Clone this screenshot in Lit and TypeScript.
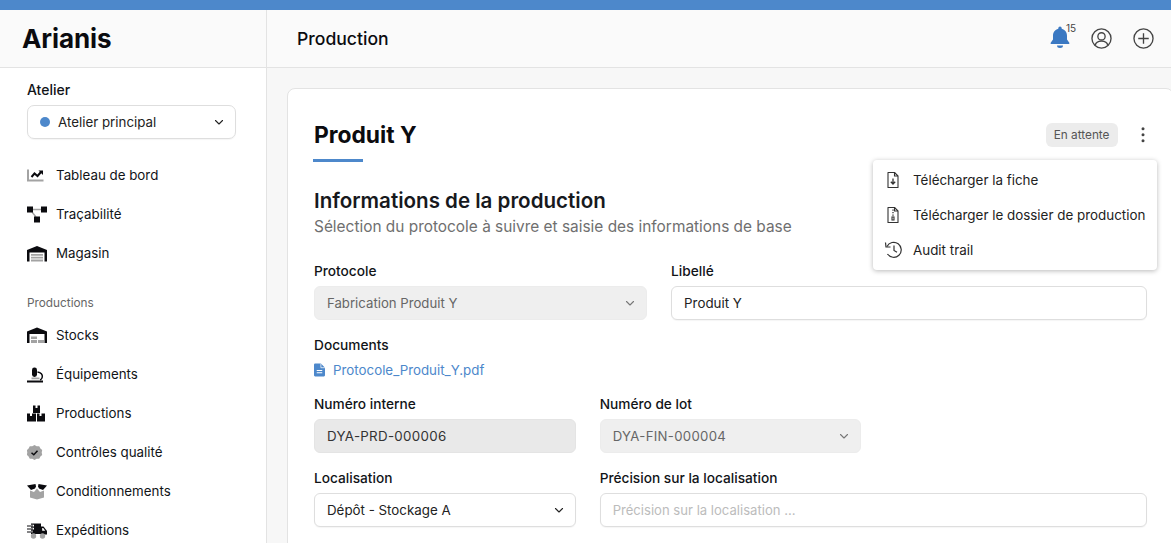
import { LitElement, css, html, svg } from "lit";
import { customElement } from "lit/decorators.js";

const chevron = html`<svg class="chev" viewBox="0 0 12 12" width="12" height="12"><path d="M2.500 4.500 6 8l3.500-3.500" fill="none" stroke="currentColor" stroke-width="1.100" stroke-linecap="round" stroke-linejoin="round"/></svg>`;

const G = "#a3a3a3";
const K = "#0b0b0f";

const icons: Record<string, unknown> = {
  dash: svg`<path d="M1 2.500v11h15.500" fill="none" stroke="${G}" stroke-width="2"/><path d="M4.500 10l3-3.500 3 2.500 3.500-4" fill="none" stroke="${K}" stroke-width="2"/><path d="M11.500 3.500H16V8z" fill="${K}"/>`,
  trace: svg`<path d="M6 3.500h8M5 6l4 5" stroke="${G}" stroke-width="1.500" fill="none"/><rect x="0" y="0.500" width="6" height="6" fill="${K}"/><rect x="14" y="0.500" width="6" height="6" fill="${K}"/><rect x="7" y="10.500" width="6" height="6" fill="${K}"/>`,
  store: svg`<path d="M0 16.500V5L10 1l10 4v11.500h-2.500V7.500H2.500v9z" fill="${K}"/><path d="M4 9h12v1.800H4zM4 11.800h12v1.800H4zM4 14.600h12v1.900H4z" fill="${G}"/>`,
  stock: svg`<path d="M0 16V4.500L10 .5l10 4V16h-2.500V7H2.500v9z" fill="${K}"/><path d="M4 9.500h6v2.500H4zM4 13h6v3H4zM11 13h6v3h-6z" fill="${G}"/>`,
  equip: svg`<rect x="5" y="1.500" width="5" height="9.500" rx="2.400" fill="${K}"/><path d="M10.500 6c3.500.5 5.200 2.500 4.800 5-.2 1.300-1 2.400-2.200 3" fill="none" stroke="${K}" stroke-width="1.500"/><path d="M4.500 11.500h8v1.800h-8z" fill="${G}"/><rect x="0" y="14.500" width="16" height="2" fill="${K}"/>`,
  prod: svg`<path d="M6 .5h2.500v2.500h2V.5H13v7.500H6z" fill="${K}"/><path d="M0 8.500h3v2.500h2V8.500h4v8H0z" fill="${K}"/><path d="M10 8.500h2.500v2.500h2V8.500H18v8h-8z" fill="${K}"/>`,
  qc: svg`<path d="M7.500 1l2.200 1.200 2.500 0 1.200 2.200 1.800 1.700-.5 2.400.5 2.400-1.800 1.700-1.200 2.200-2.500 0L7.500 16l-2.200-1.200-2.500 0-1.200-2.200L-.200 10.900.300 8.500-.200 6.100 1.600 4.400l1.200-2.200 2.500 0z" fill="${G}"/><path d="M4.500 8.700 6.800 10.800l3.700-4" fill="none" stroke="${K}" stroke-width="1.500"/>`,
  pack: svg`<path d="M3 7.500l4 1.500 3-3.500 3 3.500 4-1.500v7L10 16.500l-7-2z" fill="${G}"/><path d="M0 2.500 8.500 1 9 3.500 8 5.500 4 7z" fill="${K}"/><path d="M20 2.500 11.500 1 11 3.500 12 5.500 16 7z" fill="${K}"/>`,
  ship: svg`<path d="M4 1.500h10v10.500H4z" fill="${K}"/><path d="M0 3.700h7M0 6.700h7M0 9.700h6" stroke="#fff" stroke-width="1.800"/><path d="M0 4h6M0 7h6M0 10h6" stroke="${K}" stroke-width="1"/><path d="M14 4.500h2.500l3.500 4.500v3.500h-6z" fill="${K}"/><path d="M15.200 6h1l2 2.800h-3z" fill="#fff"/><circle cx="6.500" cy="14" r="2.700" fill="${G}"/><circle cx="15.500" cy="14" r="2.700" fill="${G}"/>`,
};

const nav = (k: string, label: string) => html`<a class="nav"><svg class="ni" viewBox="0 0 20 17" width="20" height="17">${icons[k]}</svg><span>${label}</span></a>`;

@customElement("app-root")
export class AppRoot extends LitElement {
  static styles = css`
    :host {
      display: block;
      height: 543px;
      overflow: hidden;
      background: #f7f7f7;
      color: #111418;
      font-family: Inter, "Liberation Sans", sans-serif;
      font-size: 13.330px;
      position: relative;
    }
    .topline {
      height: 9.500px;
      background: #4d88cb;
    }
    .shell {
      display: flex;
      height: 534px;
    }
    .side {
      width: 266px;
      flex: none;
      background: #fff;
      border-right: 1px solid #e3e3e3;
    }
    .logo {
      height: 57px;
      background: #fafafa;
      border-bottom: 1px solid #e3e3e3;
      display: flex;
      align-items: center;
      padding-left: 22px;
      font-size: 26px;
      font-weight: 700;
      color: #0b0b0f;
      letter-spacing: -0.100px;
    }
    .atelier {
      padding: 13px 30px 0 27px;
    }
    .atelier label {
      display: block;
      font-weight: 500;
      font-size: 14px;
      line-height: 17px;
      margin-bottom: 7px;
    }
    .asel {
      height: 32px;
      border: 1px solid #dedede;
      border-radius: 7px;
      display: flex;
      align-items: center;
      padding: 0 10px 0 12px;
      gap: 8px;
      color: #222;
      box-shadow: 0 1px 1px rgba(0, 0, 0, 0.04);
    }
    .dot {
      width: 10px;
      height: 10px;
      border-radius: 50%;
      background: #4d88cb;
    }
    .asel span {
      flex: 1;
    }
    .navs {
      padding: 17px 0 0 27px;
    }
    .nav {
      display: flex;
      align-items: center;
      gap: 9px;
      height: 39px;
    }
    .nav span {
      color: #111418;
    }
    .group {
      font-size: 11.800px;
      color: #666;
      margin: 22px 0 5px;
      line-height: 16px;
    }
    .main {
      flex: 1;
      min-width: 0;
    }
    .head {
      height: 57px;
      background: #fafafa;
      border-bottom: 1px solid #e3e3e3;
      display: flex;
      align-items: center;
      padding: 0 17.500px 0 30px;
    }
    .head h1 {
      flex: 1;
      margin: 0;
      font-size: 17.600px;
      font-weight: 500;
      color: #0b0b0f;
    }
    .tools {
      display: flex;
      align-items: center;
      gap: 21px;
    }
    .bell {
      position: relative;
      display: flex;
      margin-right: -1px;
      top: -1px;
    }
    .bell b {
      position: absolute;
      left: 17.500px;
      top: -3px;
      font-size: 10px;
      font-weight: 400;
      color: #444;
    }
    .card {
      margin: 20px -3px 0 20px;
      background: #fff;
      border: 1px solid #e3e3e3;
      border-radius: 8px;
      padding: 31px 26px 0 26px;
      height: 520px;
      box-sizing: border-box;
    }
    .title {
      display: flex;
      align-items: center;
      height: 30px;
    }
    .title h2 {
      flex: 1;
      margin: 0;
      font-size: 22.800px;
      font-weight: 700;
      color: #0b0b0f;
    }
    .badge {
      background: #ececec;
      color: #555;
      font-size: 11.800px;
      border-radius: 6px;
      padding: 0 8px;
      height: 24px;
      line-height: 24px;
      margin-right: 17px;
    }
    .more {
      display: flex;
      margin-right: -3.500px;
    }
    .rule {
      width: 50px;
      height: 3px;
      background: #4d88cb;
      margin: 9px 0 0 -1px;
    }
    h3 {
      margin: 25px 0 0;
      font-size: 20.550px;
      font-weight: 600;
      line-height: 28px;
      color: #17191d;
    }
    .sub {
      color: #6f6f6f;
      font-size: 15.420px;
      line-height: 20px;
      margin: 2px 0 0;
    }
    .grid {
      display: grid;
      grid-template-columns: repeat(12, 1fr);
      column-gap: 24px;
      margin-top: 26px;
    }
    .f label {
      display: block;
      font-weight: 500;
      font-size: 13.700px;
      line-height: 17px;
      margin-bottom: 6px;
    }
    .c5 { grid-column: span 5; }
    .c7 { grid-column: span 7; }
    .c4 { grid-column: span 4; }
    .c8 { grid-column: span 8; }
    .c12 { grid-column: span 12; }
    .f {
      margin-bottom: 17px;
    }
    .box {
      height: 34px;
      box-sizing: border-box;
      border: 1px solid #dedede;
      border-radius: 6px;
      display: flex;
      align-items: center;
      padding: 0 10px 0 12px;
      background: #fff;
      color: #222;
      justify-content: space-between;
      box-shadow: 0 1px 1px rgba(0, 0, 0, 0.04);
    }
    .box.off {
      background: #efefef;
      border-color: #ececec;
      color: #666;
      box-shadow: none;
      font-size: 13.200px;
    }
    .box.ro {
      background: #e9e9e9;
      border-color: #e4e4e4;
      color: #333;
      box-shadow: none;
    }
    .box.ph {
      color: #bcbcbc;
      font-size: 13.100px;
    }
    .num {
      letter-spacing: 0.300px;
    }
    .off .chev {
      color: #777;
    }
    .doc {
      display: flex;
      align-items: center;
      gap: 8px;
      color: #4d88cb;
      line-height: 17px;
      margin-top: 8px;
    }
    .menu {
      position: absolute;
      left: 873px;
      top: 160px;
      width: 284px;
      height: 110px;
      box-sizing: border-box;
      padding: 2px 0;
      background: #fff;
      border-radius: 4px;
      box-shadow: 0 1px 5px rgba(0, 0, 0, 0.28);
    }
    .menu div {
      height: 35px;
      display: flex;
      align-items: center;
      gap: 11px;
      padding-left: 13px;
      font-size: 13.400px;
      color: #222;
    }
    .menu svg {
      width: 16px;
      height: 16px;
      flex: none;
      overflow: visible;
    }
  `;

  render() {
    return html`
      <div class="topline"></div>
      <div class="shell">
        <aside class="side">
          <div class="logo">Arianis</div>
          <div class="atelier">
            <label>Atelier</label>
            <div class="asel"><i class="dot"></i><span>Atelier principal</span>${chevron}</div>
          </div>
          <div class="navs">
            ${nav("dash", "Tableau de bord")}
            ${nav("trace", "Traçabilité")}
            ${nav("store", "Magasin")}
            <div class="group">Productions</div>
            ${nav("stock", "Stocks")}
            ${nav("equip", "Équipements")}
            ${nav("prod", "Productions")}
            ${nav("qc", "Contrôles qualité")}
            ${nav("pack", "Conditionnements")}
            ${nav("ship", "Expéditions")}
          </div>
        </aside>
        <main class="main">
          <header class="head">
            <h1>Production</h1>
            <div class="tools">
              <span class="bell">
                <svg viewBox="0 0 22 24" width="22" height="24"><path d="M11 1.500a1.700 1.700 0 0 1 1.700 1.700v.6c3.300.8 5.300 3.600 5.300 7v3.700l2.300 3.200c.4.600 0 1.300-.7 1.300H2.400c-.7 0-1.100-.7-.7-1.300L4 14.500v-3.700c0-3.400 2-6.200 5.300-7v-.6A1.700 1.700 0 0 1 11 1.500z" fill="#3a78c2"/><path d="M8 20.500h6a3 2.500 0 0 1-6 0z" fill="#3a78c2"/></svg>
                <b>15</b>
              </span>
              <svg viewBox="0 0 22 22" width="21" height="21" fill="none" stroke="#444" stroke-width="1.400"><circle cx="11" cy="11" r="10"/><circle cx="11" cy="8.800" r="3.800"/><path d="M4.500 18c.5-3 3-4.300 6.500-4.300s6 1.300 6.500 4.300"/></svg>
              <svg viewBox="0 0 22 22" width="21" height="21" fill="none" stroke="#444" stroke-width="1.400"><circle cx="11" cy="11" r="10"/><path d="M11 5.500v11M5.500 11h11"/></svg>
            </div>
          </header>
          <section class="card">
            <div class="title">
              <h2>Produit Y</h2>
              <span class="badge">En attente</span>
              <span class="more"><svg viewBox="0 0 16 16" width="16" height="16"><circle cx="8" cy="1.800" r="1.500" fill="#444"/><circle cx="8" cy="7.800" r="1.500" fill="#444"/><circle cx="8" cy="13.800" r="1.500" fill="#444"/></svg></span>
            </div>
            <div class="rule"></div>
            <h3>Informations de la production</h3>
            <p class="sub">Sélection du protocole à suivre et saisie des informations de base</p>
            <div class="grid">
              <div class="f c5"><label>Protocole</label><div class="box off">Fabrication Produit Y ${chevron}</div></div>
              <div class="f c7"><label>Libellé</label><div class="box">Produit Y</div></div>
              <div class="f c12"><label>Documents</label>
                <div class="doc"><svg viewBox="0 0 12 14" width="11" height="14"><path d="M1.200 0H7.500L12 4.500V12.800A1.200 1.200 0 0 1 10.800 14H1.200A1.200 1.200 0 0 1 0 12.800V1.200A1.200 1.200 0 0 1 1.200 0z" fill="#4d88cb"/><path d="M7.500 0v4.500H12" fill="none" stroke="#fff" stroke-width=".8"/><path d="M3 7.500h6M3 10h6" stroke="#fff" stroke-width="1.200"/></svg>Protocole_Produit_Y.pdf</div>
              </div>
              <div class="f c4"><label>Numéro interne</label><div class="box ro"><span class="num">DYA-PRD-000006</span></div></div>
              <div class="f c4"><label>Numéro de lot</label><div class="box off"><span class="num">DYA-FIN-000004</span> ${chevron}</div></div>
              <div class="f c4"></div>
              <div class="f c4"><label>Localisation</label><div class="box">Dépôt - Stockage A ${chevron}</div></div>
              <div class="f c8"><label>Précision sur la localisation</label><div class="box ph">Précision sur la localisation …</div></div>
            </div>
          </section>
        </main>
      </div>
      <div class="menu">
        <div><svg viewBox="0 0 16 16" fill="none" stroke="#333" stroke-width="1.100"><path d="M2 .5h6.500l3.500 3.500v11.500H2z" stroke-linejoin="round"/><path d="M8.500 .5v3.500H12"/><path d="M7 6.500v5.500M4.800 9.800 7 12l2.200-2.200" stroke-width="1.300"/></svg>Télécharger la fiche</div>
        <div><svg viewBox="0 0 16 16" fill="none" stroke="#333" stroke-width="1.100"><path d="M2 .5h6.500l3.500 3.500v11.500H2z" stroke-linejoin="round"/><path d="M8.500 .5v3.500H12"/><path d="M7 2.500v1.300M7 5v1.300M7 7.500v1.300" stroke-width="1.300"/><rect x="6" y="10" width="2" height="3"/></svg>Télécharger le dossier de production</div>
        <div><svg viewBox="0 0 16 16" fill="none" stroke="#333" stroke-width="1.200"><path d="M1 4.500A7.500 7.500 0 1 1 1.500 12"/><path d="M-.5 .5l.5 4.500h4.500"/><path d="M8 3.500V8.500l3 1.800"/></svg>Audit trail</div>
      </div>
    `;
  }
}
